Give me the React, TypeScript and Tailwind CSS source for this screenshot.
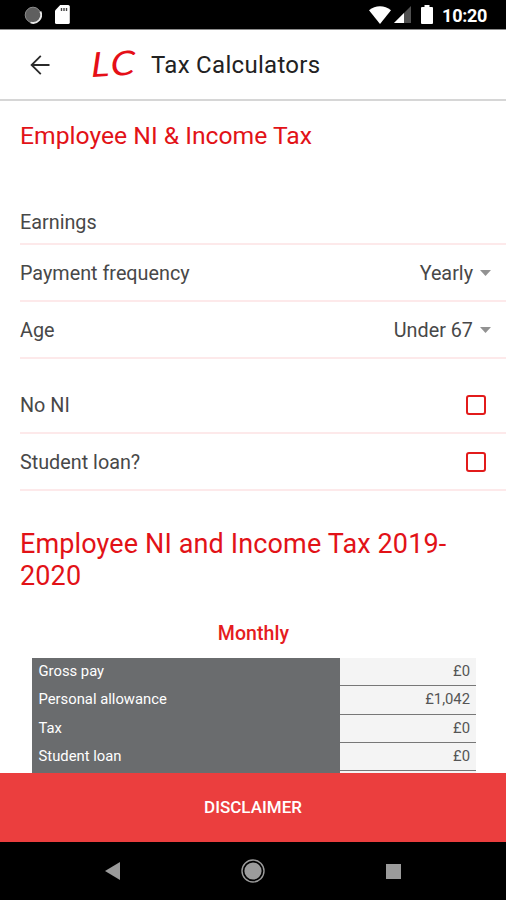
import type { ReactNode } from "react";

interface FormRowProps {
  label: string;
  className?: string;
  children?: ReactNode;
}

const monthlyRows = [
  { label: "Gross pay", value: "£0" },
  { label: "Personal allowance", value: "£1,042" },
  { label: "Tax", value: "£0" },
  { label: "Student loan", value: "£0" },
  { label: "", value: "" },
];

function StatusBar() {
  return (
    <div className="flex h-[30px] shrink-0 items-center justify-between border-b border-[#8c8c8c] bg-black pr-[19px] pl-6">
      <div className="flex items-center gap-[13px]">
        <svg width="18" height="18" viewBox="0 0 18 18">
          <circle cx="9" cy="9" r="7.8" fill="#5f5f5f" stroke="#8c8c8c" />
          <path
            d="M16.4 5.5a8 8 0 0 1-9.8 11"
            fill="none"
            stroke="#e8e8e8"
            strokeWidth="1.8"
          />
        </svg>
        <svg width="15" height="19" viewBox="0 0 15 19">
          <path
            d="M5.2 0h8a1.6 1.6 0 0 1 1.6 1.6v15.8A1.6 1.6 0 0 1 13.2 19H1.6A1.6 1.6 0 0 1 0 17.4V5.4z"
            fill="#fff"
          />
          <path d="M6.5 3v3M9 3v3M11.5 3v3" stroke="#444" strokeWidth="1.4" />
        </svg>
      </div>
      <div className="flex items-center">
        <svg width="22" height="18" viewBox="0 0 22 18">
          <path d="M0 4.2C6.4-1.2 15.6-1.2 22 4.2L11 18z" fill="#fff" />
        </svg>
        <svg className="ml-[3px]" width="17" height="17" viewBox="0 0 17 17">
          <path d="M17 0v17H0z" fill="#505050" />
          <path d="M10 7v10H0z" fill="#fff" />
        </svg>
        <svg className="ml-[10px]" width="12" height="19" viewBox="0 0 12 19">
          <path
            d="M3.5 0h5v2H11a1 1 0 0 1 1 1v15a1 1 0 0 1-1 1H1a1 1 0 0 1-1-1V3a1 1 0 0 1 1-1h2.5z"
            fill="#fff"
          />
        </svg>
        <span className="mt-[3px] ml-[9px] text-[18px] leading-none font-bold tracking-[-0.3px] text-white">
          10:20
        </span>
      </div>
    </div>
  );
}

function Header() {
  return (
    <header className="flex h-[71px] shrink-0 items-center border-b-2 border-[#d6d6d6] pl-[30px]">
      <button aria-label="Back">
        <svg
          width="20"
          height="20"
          viewBox="0 0 20 20"
          fill="none"
          stroke="#2a2a2a"
          strokeWidth="1.8"
        >
          <path d="M19.5 10H1.5M10.8 .9L1.6 10l9.2 9.1" />
        </svg>
      </button>
      <div className="ml-[41px] w-[60px] pb-0.5">
        <div className="w-fit origin-left scale-x-[1.15] -rotate-3 -skew-x-3 font-['Lato','Roboto',sans-serif] text-[34px] leading-none tracking-[2px] text-[#e50f17] italic">
          LC
        </div>
      </div>
      <h1 className="text-[24px] leading-none tracking-[0.3px]">
        Tax Calculators
      </h1>
    </header>
  );
}

function FormRow({ label, className = "h-[57px] pt-[2px]", children }: FormRowProps) {
  return (
    <div
      className={`${className} ml-5 flex items-center justify-between border-b-2 border-[#fde9ea] text-[19.8px] text-[#484848]`}
    >
      <span>{label}</span>
      {children}
    </div>
  );
}

function SelectValue({ value }: { value: string }) {
  return (
    <div className="flex items-center gap-[7px] pr-[15px]">
      <span>{value}</span>
      <svg className="mb-0.5" width="11" height="6" viewBox="0 0 11 6">
        <path d="M0 0h11L5.5 6z" fill="#929292" />
      </svg>
    </div>
  );
}

function Checkbox() {
  return (
    <div
      role="checkbox"
      aria-checked="false"
      className="mr-5 mb-px size-5 rounded-[3px] border-2 border-[#e21b1b]"
    />
  );
}

function MonthlyTable() {
  return (
    <section>
      <h3 className="pl-px text-center text-[19.5px] leading-6 font-medium tracking-[0.1px] text-[#e51c20]">
        Monthly
      </h3>
      <div className="mt-3 mr-[30px] ml-8 text-[14.8px]">
        {monthlyRows.map((row, index) => (
          <div key={index} className="flex h-[28.3px]">
            <div className="flex w-[308px] items-center bg-[#6a6c6e] pb-[2px] pl-[6.5px] text-white">
              {row.label}
            </div>
            <div className="flex flex-1 items-center justify-end border-b border-[#777] bg-[#f4f4f4] pr-[6px] pb-px text-[#555]">
              {row.value}
            </div>
          </div>
        ))}
      </div>
    </section>
  );
}

function NavigationBar() {
  return (
    <nav className="flex h-[58px] shrink-0 items-center justify-between bg-black pr-[105px] pl-[105px]">
      <svg width="15" height="18" viewBox="0 0 15 18">
        <path d="M15 0v18L0 9z" fill="#9b9b9b" />
      </svg>
      <svg width="24" height="24" viewBox="0 0 24 24">
        <circle cx="12" cy="12" r="8.6" fill="#9b9b9b" />
        <circle cx="12" cy="12" r="11" fill="none" stroke="#9b9b9b" strokeWidth="1.4" />
      </svg>
      <div className="size-[15px] bg-[#9b9b9b]" />
    </nav>
  );
}

export default function App() {
  return (
    <div className="flex h-[900px] w-[506px] flex-col overflow-hidden bg-white font-['Roboto',sans-serif] text-[#222]">
      <StatusBar />
      <Header />
      <main className="min-h-0 flex-1 overflow-hidden">
        <h2 className="mt-[19px] ml-5 text-[24.7px] leading-8 text-[#e21217]">
          Employee NI &amp; Income Tax
        </h2>
        <div className="mt-[47px]">
          <FormRow label="Earnings" className="h-[46px] pt-[3px]" />
          <FormRow label="Payment frequency">
            <SelectValue value="Yearly" />
          </FormRow>
          <FormRow label="Age">
            <SelectValue value="Under 67" />
          </FormRow>
        </div>
        <div className="mt-[18px]">
          <FormRow label="No NI">
            <Checkbox />
          </FormRow>
          <FormRow label="Student loan?">
            <Checkbox />
          </FormRow>
        </div>
        <h2 className="mt-[37px] mr-5 mb-[30px] ml-5 text-[27px] leading-8 tracking-[0.13px] text-[#e21217]">
          Employee NI and Income Tax 2019-2020
        </h2>
        <MonthlyTable />
      </main>
      <button className="h-[69px] shrink-0 bg-[#eb3e3e] text-[17px] font-medium text-white">
        DISCLAIMER
      </button>
      <NavigationBar />
    </div>
  );
}
